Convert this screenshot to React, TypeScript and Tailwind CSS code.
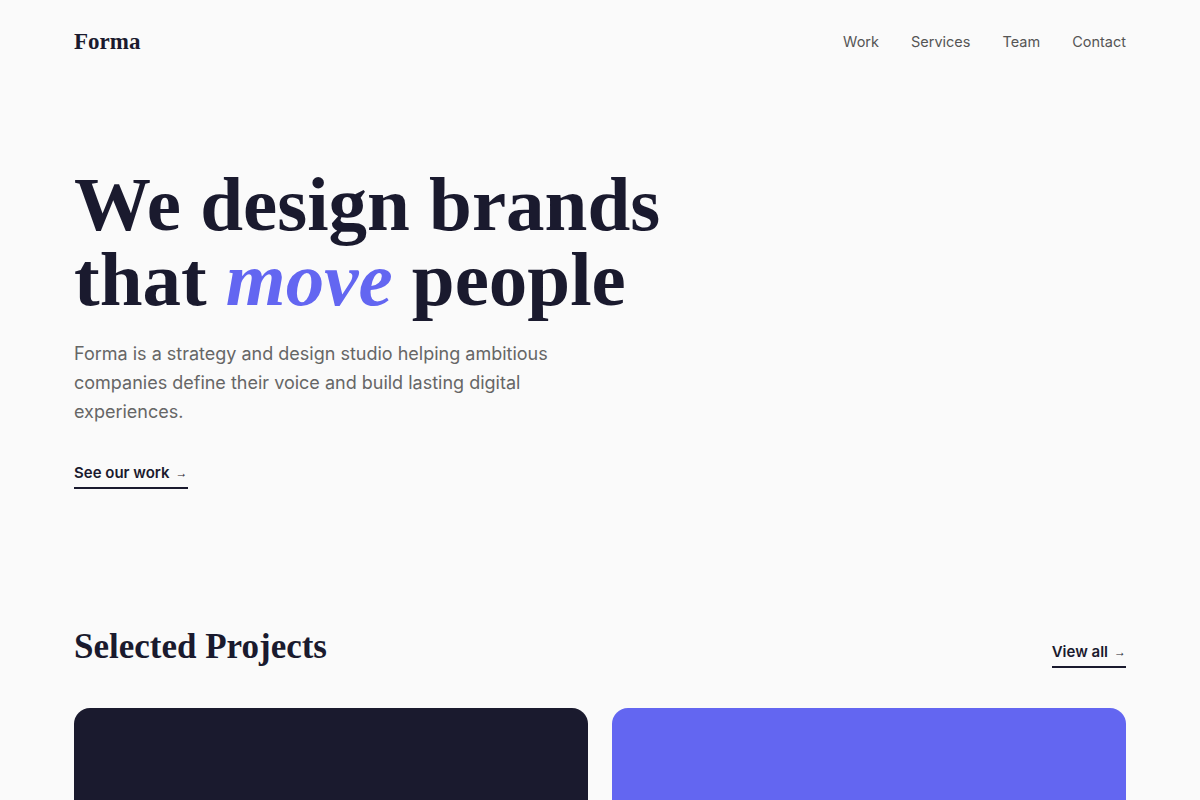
const serif = "font-['Liberation_Serif','DejaVu_Serif',serif]";
const sans = "font-['Inter','Liberation_Sans',sans-serif]";

const navItems = ['Work', 'Services', 'Team', 'Contact'];

function ArrowLink({ label }: { label: string }) {
  return (
    <a
      href="#"
      className="inline-flex items-center gap-1.5 border-b-2 border-[#1a1a2e] pb-[3px] text-[15px] font-semibold leading-[22px] text-[#1a1a2e]"
    >
      {label}
      <span className="font-['Liberation_Sans',sans-serif] text-[12px] font-normal">→</span>
    </a>
  );
}

export default function App() {
  return (
    <div className={`min-h-screen bg-[#fafafa] ${sans}`}>
      <div className="mx-auto max-w-[1100px] px-6">
        {/* Header */}
        <header className="flex h-[84px] items-center justify-between">
          <span className={`${serif} text-[23px] font-bold text-[#1a1a2e]`}>Forma</span>
          <nav className="flex items-center gap-8">
            {navItems.map((item) => (
              <a key={item} href="#" className="text-[14.5px] text-[#555555]">
                {item}
              </a>
            ))}
          </nav>
        </header>

        {/* Hero */}
        <section className="pt-[83px] pb-[134px]">
          <h1 className={`${serif} text-[77px] font-bold leading-[75px] text-[#1a1a2e]`}>
            We design brands
            <br />
            that <em className="italic text-[#6366f1]">move</em> people
          </h1>
          <p className="mt-[22px] max-w-[490px] text-[18px] leading-[29px] text-[#666666]">
            Forma is a strategy and design studio helping ambitious companies define their voice and build lasting
            digital experiences.
          </p>
          <div className="mt-[34px]">
            <ArrowLink label="See our work" />
          </div>
        </section>

        {/* Projects */}
        <section className="pt-[3px]">
          <div className="mb-10 flex items-end justify-between">
            <h2 className={`${serif} text-[35px] font-bold leading-[42px] text-[#1a1a2e]`}>Selected Projects</h2>
            <ArrowLink label="View all" />
          </div>
          <div className="grid grid-cols-2 gap-6">
            <div className="h-[320px] rounded-2xl bg-[#1a1a2e]" />
            <div className="h-[320px] rounded-2xl bg-[#6366f1]" />
          </div>
        </section>
      </div>
    </div>
  );
}
